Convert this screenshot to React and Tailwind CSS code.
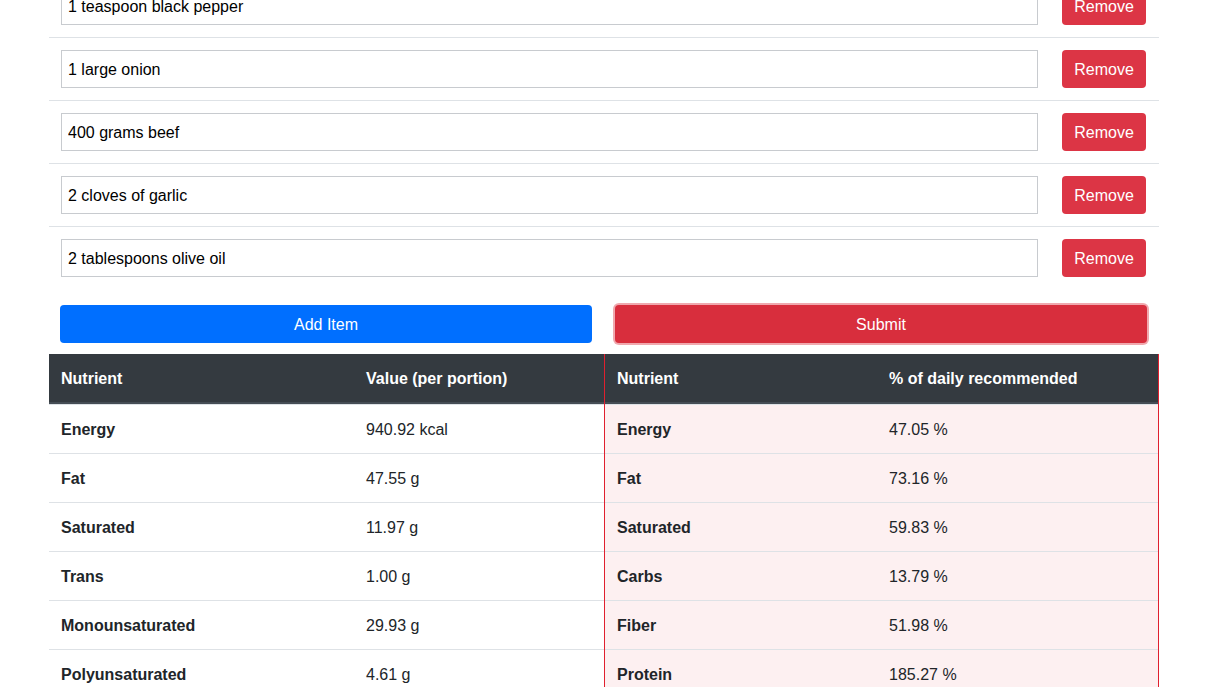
import React from "react";

const INGREDIENTS = [
  "1 teaspoon black pepper",
  "1 large onion",
  "400 grams beef",
  "2 cloves of garlic",
  "2 tablespoons olive oil",
];

const VALUES = [
  ["Energy", "940.92 kcal"],
  ["Fat", "47.55 g"],
  ["Saturated", "11.97 g"],
  ["Trans", "1.00 g"],
  ["Monounsaturated", "29.93 g"],
  ["Polyunsaturated", "4.61 g"],
];

const DAILY = [
  ["Energy", "47.05 %"],
  ["Fat", "73.16 %"],
  ["Saturated", "59.83 %"],
  ["Carbs", "13.79 %"],
  ["Fiber", "51.98 %"],
  ["Protein", "185.27 %"],
];

function IngredientRow({ value }) {
  return (
    <div className="flex items-center border-t border-[#dee2e6] py-3">
      <div className="flex-1 px-3">
        <input
          defaultValue={value}
          className="w-full h-[38px] px-[6px] pt-[2px] border border-[#c8cbcf] bg-white text-[16px] text-black outline-none"
        />
      </div>
      <div className="w-[109px] px-3">
        <button className="h-[38px] w-[84px] pt-[1px] rounded bg-[#dc3545] text-white text-[16px]">
          Remove
        </button>
      </div>
    </div>
  );
}

function NutrientTable({ head, rows, firstCol, daily }) {
  return (
    <div
      className={
        daily
          ? "flex-1 border-x border-[#e0202f] bg-[#fdf0f1]"
          : "w-[555px] bg-white"
      }
    >
      <div className="flex bg-[#343a40] text-white font-bold border-b-2 border-[#454d55] h-[50px] pt-[2px] items-center">
        <div className={firstCol + " px-3"}>{head[0]}</div>
        <div className="flex-1 px-3">{head[1]}</div>
      </div>
      {rows.map(([name, val]) => (
        <div key={name} className="flex border-t border-[#dee2e6] h-[49px] pt-[1px] items-center">
          <div className={firstCol + " px-3 font-bold"}>{name}</div>
          <div className="flex-1 px-3">{val}</div>
        </div>
      ))}
    </div>
  );
}

export default function App() {
  return (
    <div className="h-[687px] overflow-hidden bg-white text-[#212529] text-[16px] font-['Liberation_Sans',sans-serif]">
      <div className="w-[1110px] ml-[49px] -mt-[26px]">
        {INGREDIENTS.map((item) => (
          <IngredientRow key={item} value={item} />
        ))}
        <div className="flex gap-[23px] mt-[16px] pl-[11px] pr-[12px]">
          <button className="flex-1 h-[38px] pt-[1px] rounded bg-[#006fff] text-white">
            Add Item
          </button>
          <button className="flex-1 h-[38px] pt-[1px] rounded bg-[#d82e3d] text-white shadow-[0_0_0_2px_rgba(230,110,120,0.6)]">
            Submit
          </button>
        </div>
        <div className="flex mt-[11px]">
          <NutrientTable
            head={["Nutrient", "Value (per portion)"]}
            rows={VALUES}
            firstCol="w-[305px]"
          />
          <NutrientTable
            head={["Nutrient", "% of daily recommended"]}
            rows={DAILY}
            firstCol="w-[272px]"
            daily
          />
        </div>
      </div>
    </div>
  );
}
